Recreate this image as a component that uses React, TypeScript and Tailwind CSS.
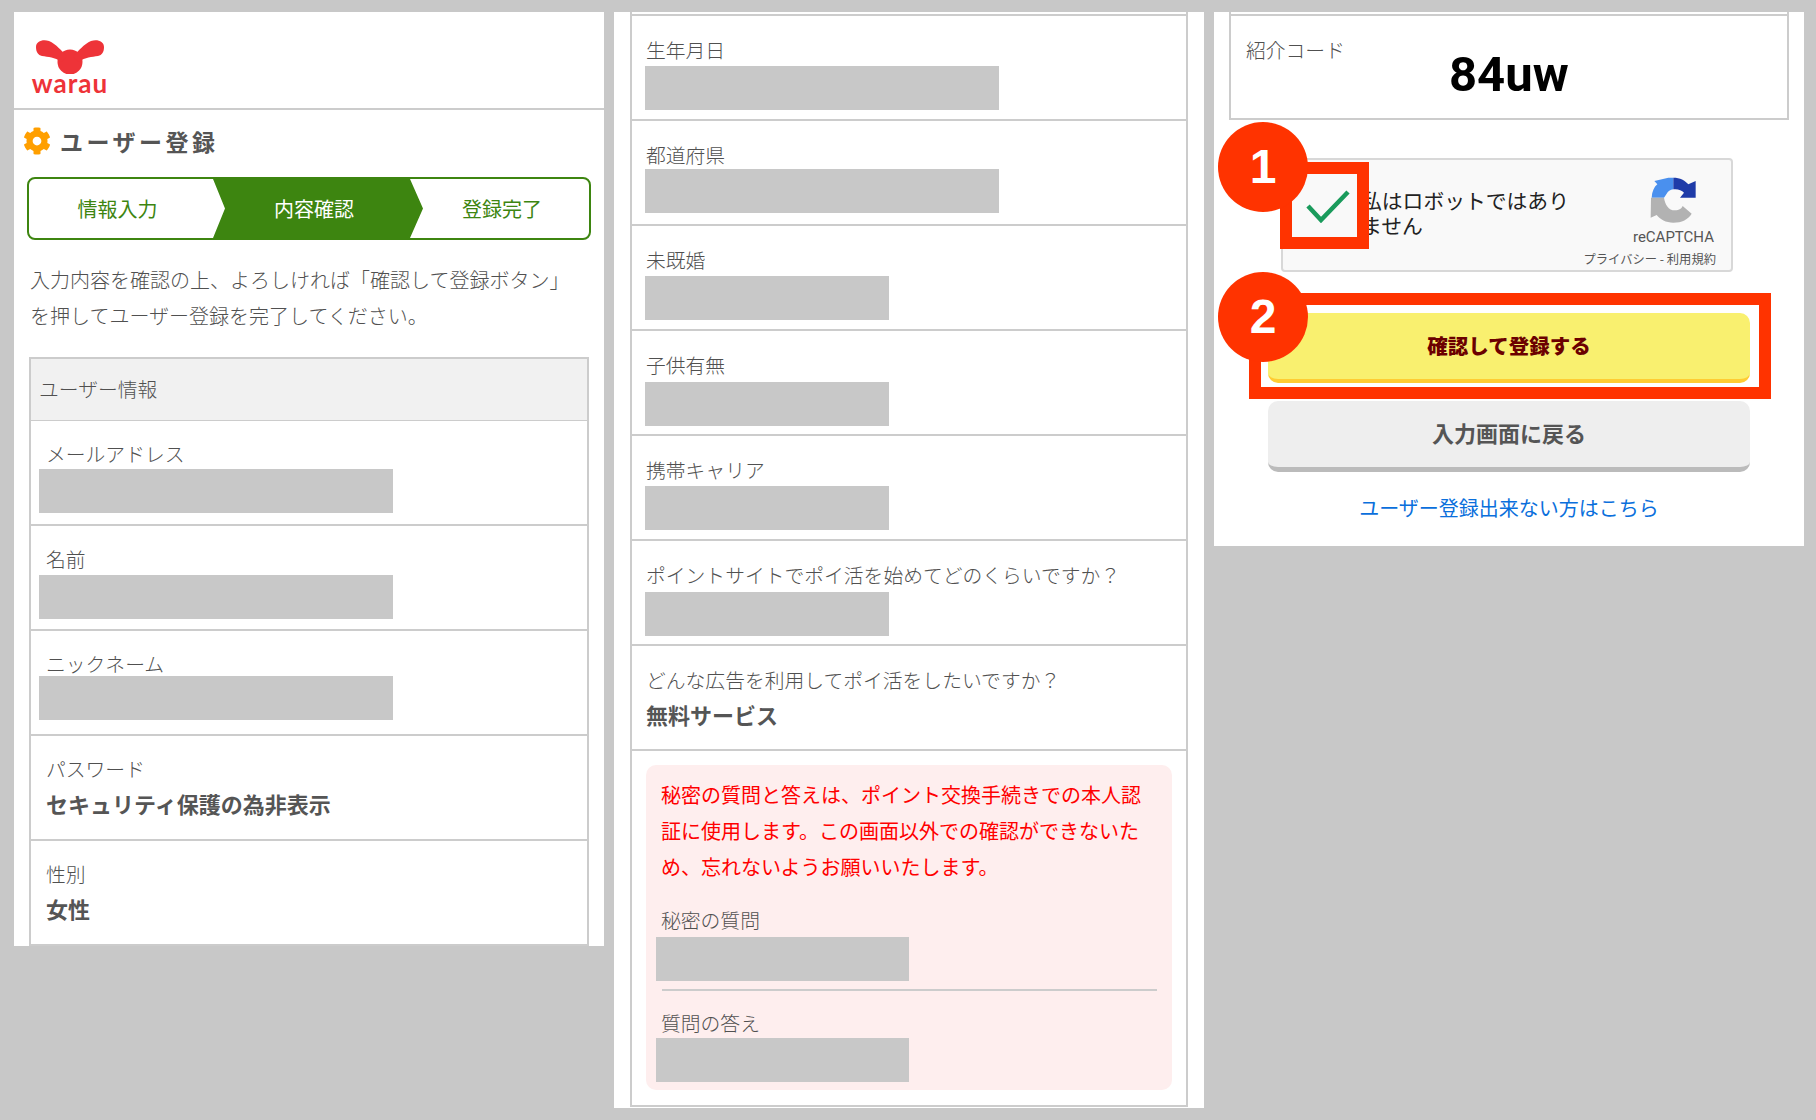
import { FaCog } from 'react-icons/fa';

type FieldProps = {
  label: string;
  box?: string;
  value?: string;
  pad: string;
  gap?: string;
};

// left column: label x + box offset differ from the other columns, so classes are passed in
function Field({ label, box, value, pad, gap }: FieldProps) {
  return (
    <div className={`h-[105px] border-b-2 border-[#cccccc] ${pad}`}>
      <div className="text-[19.8px] leading-[28px] text-[#505050] font-light">{label}</div>
      {box && (
        <div className={gap}>
          <div className={`h-[44px] bg-[#c8c8c8] ${box}`} />
        </div>
      )}
      {value && <div className="mt-[6px] text-[22px] leading-[28px] font-bold text-[#555555]">{value}</div>}
    </div>
  );
}

function WarauLogo() {
  return (
    <div className="flex w-[76px] flex-col items-center">
      <svg width="72" height="34" viewBox="0 0 72 34">
        <circle cx="36" cy="22" r="12.5" fill="#ee3338" />
        <path d="M2 7C2 1 9-1 15 1C22 4 28 11 33 17L27 22C21 17 14 17 8 16C4 15 2 12 2 7Z" fill="#ee3338" />
        <path d="M70 7C70 1 63-1 57 1C50 4 44 11 39 17L45 22C51 17 58 17 64 16C68 15 70 12 70 7Z" fill="#ee3338" />
      </svg>
      <div className="-mt-[1px] font-['Lato',sans-serif] text-[26px] leading-[20px] font-bold tracking-[1px] text-[#ee3338]">
        warau
      </div>
    </div>
  );
}

function StepBar() {
  return (
    <div className="relative mx-[13px] mt-[18px] flex h-[63px] items-center overflow-hidden rounded-lg border-2 border-[#3d8510] text-[20px] text-[#3d8510]">
      <div className="w-[177px] text-center">情報入力</div>
      <div className="absolute left-[184px] top-0 h-full w-[210px]">
        <svg className="absolute inset-0" width="210" height="59" viewBox="0 0 210 59">
          <path d="M0 0H197L210 29.5L197 59H0L12 29.5Z" fill="#3d8510" />
        </svg>
        <div className="relative flex h-full items-center justify-center pr-[8px] text-white">内容確認</div>
      </div>
      <div className="ml-auto w-[174px] text-center">登録完了</div>
    </div>
  );
}

function RecaptchaLogo() {
  return (
    <svg width="70" height="60" viewBox="0 0 210 180">
      <path d="M35 80C36 62 42 48 52 40L43 30L85 20H100V55C90 55 84 62 80 68L72 80Z" fill="#4a90ee" />
      <path d="M100 20C120 20 135 28 145 40L167 30V80H120L132 65C125 57 112 53 100 55Z" fill="#1f3ba8" />
      <path d="M33 80H72C75 100 85 118 105 118C118 118 125 112 128 105L155 128C145 145 125 155 100 155C78 155 60 145 50 132L32 140Z" fill="#b2b2b2" />
    </svg>
  );
}

function NumberBadge({ n, className }: { n: string; className: string }) {
  return (
    <div
      className={`absolute flex h-[90px] w-[90px] items-center justify-center rounded-full bg-[#ff3300] font-['Liberation_Sans',sans-serif] text-[48px] font-bold text-white ${className}`}
    >
      {n}
    </div>
  );
}

export default function App() {
  return (
    <div className="flex h-[1120px] items-start gap-[10px] overflow-hidden bg-[#c8c8c8] pl-[14px] pt-3 font-['Noto_Sans_CJK_JP','Liberation_Sans',sans-serif]">
      {/* left column */}
      <div className="h-[934px] w-[590px] shrink-0 overflow-hidden bg-white">
        <div className="flex h-[98px] items-start border-b-2 border-[#cccccc] pl-[18px] pt-[28px]">
          <WarauLogo />
        </div>
        <div className="mt-[13px] flex h-[36px] items-center pl-[9px]">
          <FaCog className="text-[28px] text-[#ff9f00]" />
          <div className="ml-[9px] text-[23px] font-bold tracking-[3.5px] text-[#555555]">ユーザー登録</div>
        </div>
        <StepBar />
        <p className="mx-[16px] mt-[22px] w-[550px] text-[20px] leading-[36px] text-[#505050] font-light">
          入力内容を確認の上、よろしければ「確認して登録ボタン」を押してユーザー登録を完了してください。
        </p>
        <div className="mx-[15px] mt-[23px] border-x-2 border-t-2 border-[#cccccc]">
          <div className="flex h-[62px] items-center border-b border-[#cccccc] bg-[#f1f1f1] pb-[2px] pl-2 text-[19.8px] text-[#505050] font-light">
            ユーザー情報
          </div>
          <Field label="メールアドレス" box="w-[354px] -ml-[7px]" pad="pl-[15px] pt-[19px]" gap="mt-[1px]" />
          <Field label="名前" box="w-[354px] -ml-[7px]" pad="pl-[15px] pt-[19px]" gap="mt-[2px]" />
          <Field label="ニックネーム" box="w-[354px] -ml-[7px]" pad="pl-[15px] pt-[19px]" gap="-mt-[2px]" />
          <Field label="パスワード" value="セキュリティ保護の為非表示" pad="pl-[15px] pt-[19px]" />
          <Field label="性別" value="女性" pad="pl-[15px] pt-[19px]" />
        </div>
      </div>

      {/* middle column */}
      <div className="h-[1096px] w-[590px] shrink-0 overflow-hidden bg-white">
        <div className="mx-[16px] border-x-2 border-[#cccccc]">
          <div className="h-[2px]" />
          <div className="h-[2px] bg-[#cccccc]" />
          <Field label="生年月日" box="w-[354px] -ml-[1px]" pad="pl-[14px] pt-[20px]" gap="mt-[2px]" />
          <Field label="都道府県" box="w-[354px] -ml-[1px]" pad="pl-[14px] pt-[20px]" />
          <Field label="未既婚" box="w-[244px] -ml-[1px]" pad="pl-[14px] pt-[20px]" gap="mt-[2px]" />
          <Field label="子供有無" box="w-[244px] -ml-[1px]" pad="pl-[14px] pt-[20px]" gap="mt-[3px]" />
          <Field label="携帯キャリア" box="w-[244px] -ml-[1px]" pad="pl-[14px] pt-[20px]" gap="mt-[2px]" />
          <Field label="ポイントサイトでポイ活を始めてどのくらいですか？" box="w-[244px] -ml-[1px]" pad="pl-[14px] pt-[20px]" gap="mt-[3px]" />
          <Field label="どんな広告を利用してポイ活をしたいですか？" value="無料サービス" pad="pl-[14px] pt-[20px]" />
          <div className="border-b-2 border-[#cccccc] px-[14px] pb-[15px] pt-[14px]">
            <div className="h-[325px] rounded-[10px] bg-[#feeeee] pl-[15px] pr-[12px] pt-[12px]">
              <p className="text-[20px] leading-[36px] text-[#ff0000]">
                秘密の質問と答えは、ポイント交換手続きでの本人認証に使用します。この画面以外での確認ができないため、忘れないようお願いいたします。
              </p>
              <div className="mt-[21px] text-[19.8px] leading-[28px] text-[#505050] font-light">秘密の質問</div>
              <div className="-ml-[5px] mt-[3px] h-[44px] w-[253px] bg-[#c8c8c8]" />
              <div className="ml-[1px] mt-[8px] h-[2px] w-[495px] bg-[#cccccc]" />
              <div className="mt-[18px] text-[19.8px] leading-[28px] text-[#505050] font-light">質問の答え</div>
              <div className="-ml-[5px] mt-[1px] h-[44px] w-[253px] bg-[#c8c8c8]" />
            </div>
          </div>
        </div>
      </div>

      {/* right column */}
      <div className="relative h-[534px] w-[590px] shrink-0 overflow-hidden bg-white">
        <div className="mx-[15px] h-[2px] border-x-2 border-[#cccccc]" />
        <div className="mx-[15px] h-[106px] border-2 border-[#cccccc] pl-[15px]">
          <div className="pt-[20px] text-[19.8px] leading-[28px] text-[#505050] font-light">紹介コード</div>
          <div className="-mt-[17px] ml-[203px] font-['Roboto',sans-serif] text-[49px] leading-[56px] font-bold text-black">
            84uw
          </div>
        </div>

        <div className="ml-[67px] mt-[38px] flex h-[114px] w-[452px] rounded-[4px] border-2 border-[#d8d8d8] bg-[#f9f9f9]">
          <div className="w-[78px]" />
          <div className="mt-[28px] w-[213px] text-[20.8px] leading-[25px] text-[#222222]">私はロボットではありません</div>
          <div className="ml-auto mr-[15px] flex flex-col items-end pt-[19px]">
            <div className="-my-[8px] mr-[6px] h-[60px]">
              <RecaptchaLogo />
            </div>
            <div className="mr-[2px] mt-[5px] font-['Roboto',sans-serif] text-[15px] leading-[18px] text-[#555555]">
              reCAPTCHA
            </div>
            <div className="mt-[5px] whitespace-nowrap text-[12.3px] leading-[16px] text-[#555555]">プライバシー - 利用規約</div>
          </div>
        </div>

        <div className="mx-[54px] mt-[41px] flex h-[70px] items-center justify-center rounded-[10px] border-b-4 border-[#ffcc33] bg-[#f9f06f] pb-[2px] text-[20.5px] font-black text-[#6b0000]">
          確認して登録する
        </div>
        <div className="mx-[54px] mt-[18px] flex h-[71px] items-center justify-center rounded-[10px] border-b-[5px] border-[#bbbbbb] bg-[#eeeeee] pb-[4px] text-[22px] font-bold text-[#555555]">
          入力画面に戻る
        </div>
        <div className="mt-[22px] text-center text-[20px] leading-[28px] text-[#0a6fdc]">ユーザー登録出来ない方はこちら</div>

        {/* annotations */}
        <div className="absolute left-[66px] top-[150px] flex h-[87px] w-[89px] items-center justify-center border-[12px] border-[#ff3300]">
          <svg width="44" height="33" viewBox="0 0 44 33" className="ml-[6px] mt-[2px] shrink-0">
            <path d="M2 16L15 30L42 2" fill="none" stroke="#1a9b5c" strokeWidth="4.5" />
          </svg>
        </div>
        <div className="absolute left-[35px] top-[281px] h-[106px] w-[522px] border-[12px] border-[#ff3300]" />
        <NumberBadge n="1" className="left-[4px] top-[110px]" />
        <NumberBadge n="2" className="left-[4px] top-[260px]" />
      </div>
    </div>
  );
}
